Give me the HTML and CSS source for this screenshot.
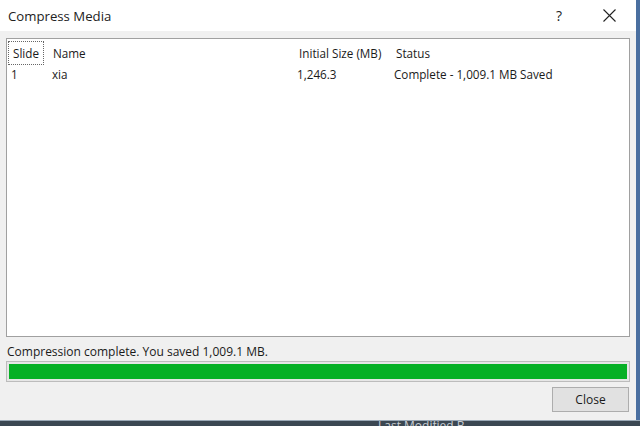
FILE: index.html
```html
<!DOCTYPE html>
<html>
<head>
<meta charset="utf-8">
<link rel="stylesheet" href="styles.css">
</head>
<body>
<div class="screen">
  <div class="dialog">
    <div class="titlebar">
      <span class="title">Compress Media</span>
      <span class="help">?</span>
      <svg class="close-x" width="13" height="13" viewBox="0 0 13 13"><path d="M0.5 0.5 L12.5 12.5 M12.5 0.5 L0.5 12.5" stroke="#222" stroke-width="1.1" fill="none"/></svg>
    </div>
    <div class="body">
      <div class="listbox">
        <div class="row head">
          <span class="c1"><span class="focus">Slide</span></span>
          <span class="c2">Name</span>
          <span class="c3">Initial Size (MB)</span>
          <span class="c4">Status</span>
        </div>
        <div class="row">
          <span class="c1">1</span>
          <span class="c2">xia</span>
          <span class="c3">1,246.3</span>
          <span class="c4">Complete - 1,009.1 MB Saved</span>
        </div>
      </div>
      <div class="msg">Compression complete. You saved 1,009.1 MB.</div>
      <div class="progress"><div class="fill"></div></div>
      <div class="buttons"><button class="btn">Close</button></div>
    </div>
  </div>
  <div class="edge"></div>
  <div class="taskbar"><span class="tb-text">Last Modified B</span></div>
</div>
</body>
</html>
```
FILE: styles.css
```css
html, body { margin: 0; padding: 0; }
body { width: 640px; height: 426px; overflow: hidden; background: #3b4752; font-family: "Open Sans", "Noto Sans", sans-serif; color: #1a1a1a; }
.screen { position: relative; width: 640px; height: 426px; }
.dialog { width: 636px; height: 420px; display: flex; flex-direction: column; background: #f0f0f0; }
.titlebar { height: 31px; background: #fff; display: flex; align-items: center; padding-left: 8px; box-sizing: border-box; }
.title { font-size: 13.2px; color: #222; flex: 1; }
.help { font-size: 14px; color: #222; margin-right: 41px; }
.close-x { margin-right: 20px; }
.body { flex: 1; padding: 7px 6px 0 6px; display: flex; flex-direction: column; }
.listbox { height: 299px; box-sizing: border-box; border: 1px solid #a0a0a0; background: #fff; padding: 3px 0 0 3px; }
.row { display: flex; font-size: 11.7px; height: 21px; align-items: center; color: #1a1a1a; }
.c1 { width: 42px; padding-left: 1px; box-sizing: border-box; }
.c2 { width: 245px; }
.c3 { width: 97px; }
.c4 { flex: 1; }
.head .c2 { padding-left: 1px; }
.head .c3 { padding-left: 1px; }
.focus { outline: 1px dotted #666; outline-offset: 3px; padding: 0 1px; margin-left: 1px; }
.msg { font-size: 12px; margin-top: 5px; height: 19px; line-height: 19px; padding-left: 1px; color: #1a1a1a; }
.progress { height: 21px; box-sizing: border-box; border: 1px solid #bcbcbc; background: #e6e6e6; padding: 2px; }
.fill { height: 100%; background: #06b025; }
.buttons { display: flex; justify-content: flex-end; margin-top: 5px; padding-right: 1px; }
.btn { width: 77px; height: 25px; border: 1px solid #adadad; background: #e1e1e1; font-family: inherit; font-size: 12px; color: #1a1a1a; padding: 0; }
.edge { position: absolute; right: 0; top: 0; width: 4px; height: 420px; background: #4a6fa0; }
.taskbar { height: 6px; background: #3b4752; border-top: 1px solid #9aa8b6; position: relative; overflow: hidden; }
.tb-text { position: absolute; left: 378px; top: -2px; font-size: 12px; line-height: 14px; color: #c8cdd2; }
```
